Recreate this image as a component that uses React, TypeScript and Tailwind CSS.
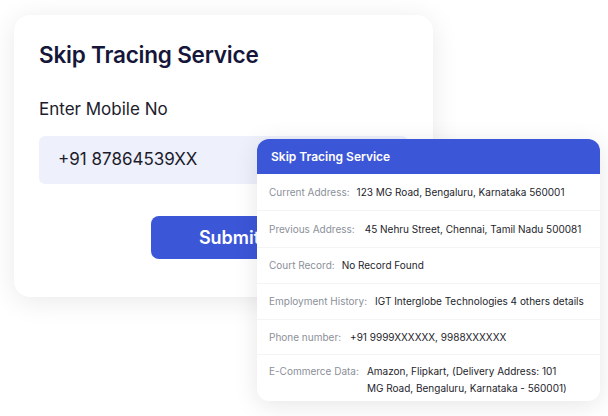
import React from "react";

const rows: { label: string; value: React.ReactNode; h: string; gap: string }[] = [
  { label: "Current Address:", value: "123 MG Road, Bengaluru, Karnataka 560001", h: "h-[36px]", gap: "gap-[7px]" },
  { label: "Previous Address:", value: "45 Nehru Street, Chennai, Tamil Nadu 500081", h: "h-[37px]", gap: "gap-[10px]" },
  { label: "Court Record:", value: "No Record Found", h: "h-[36px]", gap: "gap-[7px]" },
  { label: "Employment History:", value: "IGT Interglobe Technologies 4 others details", h: "h-[36px]", gap: "gap-[8px]" },
  { label: "Phone number:", value: "+91 9999XXXXXX, 9988XXXXXX", h: "h-[35px]", gap: "gap-[9px]" },
];

export default function App() {
  return (
    <div
      className="relative w-[608px] h-[416px] bg-white overflow-hidden"
      style={{ fontFamily: "Inter, 'Noto Sans', sans-serif" }}
    >
      <div className="ml-[14px] mt-[15px] w-[419px] h-[282px] rounded-[16px] bg-white shadow-[0_4px_28px_rgba(0,0,0,0.09)] pl-[25px] pt-[26px] flex flex-col">
        <div className="text-[22.5px] leading-[28px] font-semibold text-[#15163a] tracking-[-0.2px]">
          Skip Tracing Service
        </div>
        <div className="mt-[28px] text-[17px] leading-[24px] text-[#1c1c2c]">Enter Mobile No</div>
        <div className="mt-[15px] w-[369px] h-[48px] rounded-[6px] bg-[#eef0fb] flex items-center pl-[19px] text-[17px] text-[#1c1c2c]">
          +91 87864539XX
        </div>
        <div className="mt-[32px] ml-[112px] w-[157px] h-[43px] rounded-[8px] bg-[#3c56d8] flex items-center justify-center text-white text-[18px] font-semibold">
          Submit
        </div>
      </div>

      <div className="absolute left-[257px] top-[139px] w-[343px] h-[262px] rounded-[12px] bg-white shadow-[0_4px_24px_rgba(0,0,0,0.10)] overflow-hidden flex flex-col">
        <div className="h-[35px] bg-[#3c56d8] flex items-center pl-[14px] text-white text-[12px] font-semibold">
          Skip Tracing Service
        </div>
        {rows.map((r, i) => (
          <div
            key={r.label}
            className={`${r.h} flex items-center ${r.gap} pl-[12px] ${i > 0 ? "border-t border-[#f3f4f6]" : ""}`}
          >
            <span className="text-[10px] text-[#8b9099]">{r.label}</span>
            <span className="text-[10px] text-[#1d1d2b]">{r.value}</span>
          </div>
        ))}
        <div className="flex-1 flex gap-[8px] pl-[12px] pt-[8px] border-t border-[#f3f4f6]">
          <span className="text-[10px] leading-[17px] text-[#8b9099]">E-Commerce Data:</span>
          <span className="text-[10px] leading-[17px] text-[#1d1d2b]">
            Amazon, Flipkart, (Delivery Address: 101
            <br />
            MG Road, Bengaluru, Karnataka - 560001)
          </span>
        </div>
      </div>
    </div>
  );
}
